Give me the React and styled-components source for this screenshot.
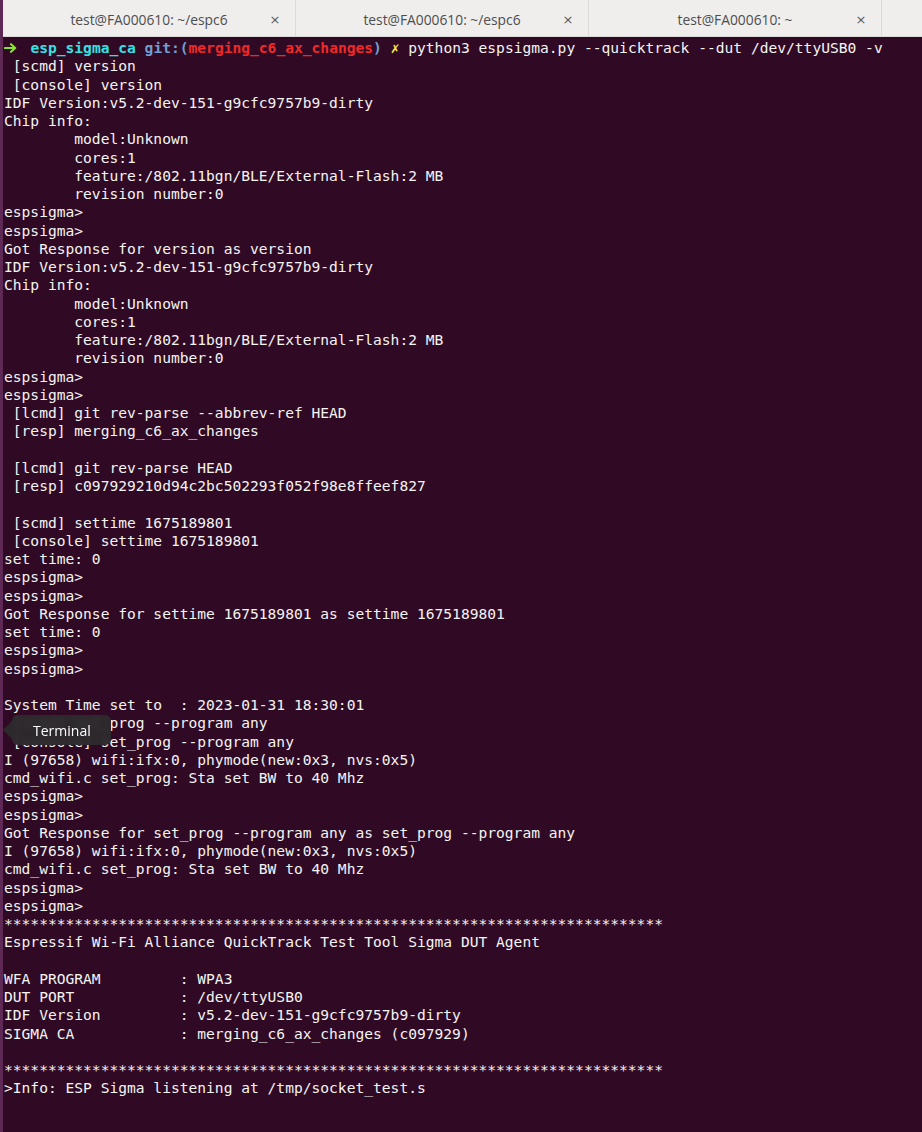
import React from "react";
import styled, { createGlobalStyle } from "styled-components";

const GlobalStyle = createGlobalStyle`
  html, body {
    margin: 0;
    padding: 0;
    background: #300a24;
  }
`;

const tabs = [
  "test@FA000610: ~/espc6",
  "test@FA000610: ~/espc6",
  "test@FA000610: ~",
];

const lines = [
  " [scmd] version",
  " [console] version",
  "IDF Version:v5.2-dev-151-g9cfc9757b9-dirty",
  "Chip info:",
  "        model:Unknown",
  "        cores:1",
  "        feature:/802.11bgn/BLE/External-Flash:2 MB",
  "        revision number:0",
  "espsigma>",
  "espsigma>",
  "Got Response for version as version",
  "IDF Version:v5.2-dev-151-g9cfc9757b9-dirty",
  "Chip info:",
  "        model:Unknown",
  "        cores:1",
  "        feature:/802.11bgn/BLE/External-Flash:2 MB",
  "        revision number:0",
  "espsigma>",
  "espsigma>",
  " [lcmd] git rev-parse --abbrev-ref HEAD",
  " [resp] merging_c6_ax_changes",
  "",
  " [lcmd] git rev-parse HEAD",
  " [resp] c097929210d94c2bc502293f052f98e8ffeef827",
  "",
  " [scmd] settime 1675189801",
  " [console] settime 1675189801",
  "set time: 0",
  "espsigma>",
  "espsigma>",
  "Got Response for settime 1675189801 as settime 1675189801",
  "set time: 0",
  "espsigma>",
  "espsigma>",
  "",
  "System Time set to  : 2023-01-31 18:30:01",
  " [scmd] set_prog --program any",
  " [console] set_prog --program any",
  "I (97658) wifi:ifx:0, phymode(new:0x3, nvs:0x5)",
  "cmd_wifi.c set_prog: Sta set BW to 40 Mhz",
  "espsigma>",
  "espsigma>",
  "Got Response for set_prog --program any as set_prog --program any",
  "I (97658) wifi:ifx:0, phymode(new:0x3, nvs:0x5)",
  "cmd_wifi.c set_prog: Sta set BW to 40 Mhz",
  "espsigma>",
  "espsigma>",
  "*".repeat(75),
  "Espressif Wi-Fi Alliance QuickTrack Test Tool Sigma DUT Agent",
  "",
  "WFA PROGRAM         : WPA3",
  "DUT PORT            : /dev/ttyUSB0",
  "IDF Version         : v5.2-dev-151-g9cfc9757b9-dirty",
  "SIGMA CA            : merging_c6_ax_changes (c097929)",
  "",
  "*".repeat(75),
  ">Info: ESP Sigma listening at /tmp/socket_test.s",
];

// green prompt arrow (zsh robbyrussell "➜")
const PromptArrow = () => (
  <Arrow>
    <svg width="13" height="10" viewBox="0 0 13 10">
      <path
        d="M1 5 H11 M7 1.2 L11.2 5 L7 8.8"
        fill="none"
        stroke="#8ae234"
        strokeWidth="2.2"
        strokeLinecap="round"
        strokeLinejoin="round"
      />
    </svg>
  </Arrow>
);

const App = () => {
  return (
    <>
      <GlobalStyle />
      <Window>
        <TabBar>
          {tabs.map((title, i) => (
            <Tab key={i}>
              <TabTitle>{title}</TabTitle>
              <Close>×</Close>
            </Tab>
          ))}
          <TabFiller />
        </TabBar>
        <Screen>
          <Line>
            <PromptArrow />
            {"  "}
            <Color c="#34e2e2" bold>esp_sigma_ca</Color>{" "}
            <Color c="#729fcf" bold>git:(</Color>
            <Color c="#ef2929" bold>merging_c6_ax_changes</Color>
            <Color c="#729fcf" bold>)</Color>{" "}
            <Color c="#fce94f" bold>✗</Color>
            {" python3 espsigma.py --quicktrack --dut /dev/ttyUSB0 -v"}
          </Line>
          {lines.map((text, i) => (
            <Line key={i}>{text || " "}</Line>
          ))}
        </Screen>
        <Tooltip>Terminal</Tooltip>
      </Window>
    </>
  );
};

const Window = styled.div`
  position: relative;
  width: 922px;
  height: 1132px;
  overflow: hidden;
  box-sizing: border-box;
  border-left: 3px solid #5e2a55;
  background: #300a24;
  display: flex;
  flex-direction: column;
`;

const TabBar = styled.div`
  display: flex;
  height: 37px;
  flex-shrink: 0;
  background: #efeeed;
  border-bottom: 1px solid #dad9d7;
  box-sizing: border-box;
`;

const Tab = styled.div`
  width: 293px;
  flex-shrink: 0;
  display: grid;
  grid-template-columns: 28px 1fr 28px;
  align-items: center;
  padding: 0 6px;
  box-sizing: border-box;
  border-right: 1px solid #dcdbd9;
`;

const TabTitle = styled.span`
  grid-column: 2;
  text-align: center;
  font-family: "Open Sans", "Noto Sans", sans-serif;
  font-size: 13.8px;
  color: #4d4d4d;
  padding-top: 2px;
`;

const Close = styled.span`
  grid-column: 3;
  text-align: center;
  font-family: "DejaVu Sans", sans-serif;
  font-size: 13px;
  color: #5a5a5a;
  padding-top: 2px;
`;

const TabFiller = styled.div`
  flex: 1;
`;

const Screen = styled.div`
  flex: 1;
  padding: 2px 0 0 1px;
  font-family: "DejaVu Sans Mono", "Liberation Mono", monospace;
  font-size: 14.6px;
  line-height: 18.25px;
  color: #f4f4f2;
`;

const Line = styled.div`
  white-space: pre;
  height: 18.25px;
`;

const Color = styled.span`
  color: ${(p) => p.c};
  font-weight: ${(p) => (p.bold ? "bold" : "normal")};
`;

const Arrow = styled.span`
  display: inline-block;
  width: 8.8px;
  height: 18px;
  overflow: visible;
  vertical-align: top;
  svg {
    display: block;
    margin: 4px 0 0 0;
  }
`;

const Tooltip = styled.div`
  position: absolute;
  left: 9px;
  top: 715px;
  height: 30px;
  padding: 0 20px 0 21px;
  display: flex;
  align-items: center;
  background: rgba(44, 42, 44, 0.95);
  backdrop-filter: blur(2px);
  border-radius: 6px;
  font-family: "Open Sans", "Noto Sans", sans-serif;
  font-size: 14px;
  color: #ffffff;
  &::before {
    content: "";
    position: absolute;
    left: -9px;
    top: 6px;
    border-top: 9px solid transparent;
    border-bottom: 9px solid transparent;
    border-right: 9px solid rgba(44, 42, 44, 0.95);
  }
`;

export default App;
